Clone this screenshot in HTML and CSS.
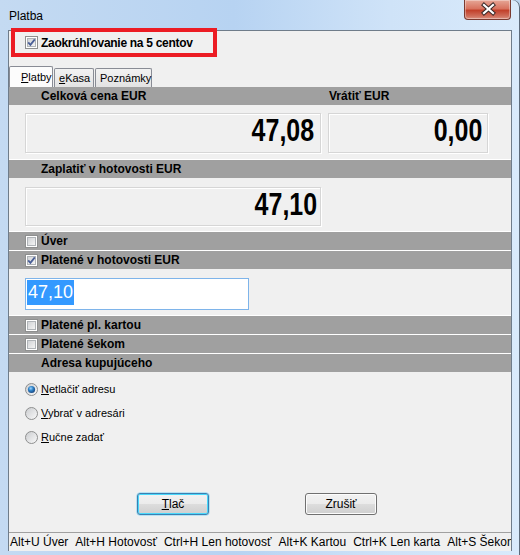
FILE: index.html
```html
<!DOCTYPE html>
<html lang="sk">
<head>
  <meta charset="UTF-8" />
  <title>Platba</title>
  <link rel="stylesheet" href="styles.css">
</head>
<body>
  <svg class="defs" width="0" height="0">
    <defs>
      <linearGradient id="boxFill" x1="0" y1="0" x2="1" y2="1">
        <stop offset="0" stop-color="#cfd1d4" />
        <stop offset="1" stop-color="#f6f6f6" />
      </linearGradient>
      <linearGradient id="radioFill" x1="0" y1="0" x2="1" y2="1">
        <stop offset="0" stop-color="#c9cbce" />
        <stop offset="1" stop-color="#fbfbfb" />
      </linearGradient>
      <radialGradient id="dotFill" cx="0.4" cy="0.35" r="0.7">
        <stop offset="0" stop-color="#9fd6ff" />
        <stop offset="0.45" stop-color="#2f83c8" />
        <stop offset="1" stop-color="#163f78" />
      </radialGradient>
    </defs>
  </svg>

  <div class="window">
    <div class="titlebar">
      <span class="title">Platba</span>
      <div class="close">
        <svg width="47" height="19" viewBox="0 0 47 19">
          <path d="M19 5 L28 13 M28 5 L19 13" stroke="#3b2a28" stroke-width="4.2" stroke-linecap="square" fill="none" />
          <path d="M19 5 L28 13 M28 5 L19 13" stroke="#fff" stroke-width="2.2" stroke-linecap="square" fill="none" />
        </svg>
      </div>
    </div>

    <div class="marker"></div>

    <div class="client">
      <div class="round-row">
        <label class="check">
          <svg width="13" height="13" viewBox="0 0 13 13"><rect x="0.5" y="0.5" width="12" height="12" fill="#fff" stroke="#8e8f8f" /><rect x="2.5" y="2.5" width="8" height="8" fill="url(#boxFill)" stroke="#b0b4b8" /><path d="M3.2 6.4 L5.4 8.8 L9.8 3.4" stroke="#4a5f97" stroke-width="1.8" fill="none" /></svg>
          <span>Zaokrúhľovanie na 5 centov</span>
        </label>
      </div>

      <div class="tabs">
        <div class="tab active"><u>P</u>latby</div>
        <div class="tab"><u>e</u>Kasa</div>
        <div class="tab">Poznámky</div>
      </div>

      <div class="panel">
        <div class="band band-first split">
          <span class="band-col1">Celková cena EUR</span>
          <span class="band-col2">Vrátiť EUR</span>
        </div>
        <div class="area area-sum">
          <div class="value wide"><span class="digits">47,08</span></div>
          <div class="value narrow"><span class="digits">0,00</span></div>
        </div>

        <div class="band"><span class="band-text">Zaplatiť v hotovosti EUR</span></div>
        <div class="area area-pay">
          <div class="value wide"><span class="digits">47,10</span></div>
        </div>

        <div class="band check-band">
          <svg width="13" height="13" viewBox="0 0 13 13"><rect x="0.5" y="0.5" width="12" height="12" fill="#fff" stroke="#8e8f8f" /><rect x="2.5" y="2.5" width="8" height="8" fill="url(#boxFill)" stroke="#b0b4b8" /></svg>
          <span>Úver</span>
        </div>
        <div class="band check-band">
          <svg width="13" height="13" viewBox="0 0 13 13"><rect x="0.5" y="0.5" width="12" height="12" fill="#fff" stroke="#8e8f8f" /><rect x="2.5" y="2.5" width="8" height="8" fill="url(#boxFill)" stroke="#b0b4b8" /><path d="M3.2 6.4 L5.4 8.8 L9.8 3.4" stroke="#4a5f97" stroke-width="1.8" fill="none" /></svg>
          <span>Platené v hotovosti EUR</span>
        </div>
        <div class="area area-input">
          <div class="input"><span class="selected">47,10</span></div>
        </div>

        <div class="band check-band">
          <svg width="13" height="13" viewBox="0 0 13 13"><rect x="0.5" y="0.5" width="12" height="12" fill="#fff" stroke="#8e8f8f" /><rect x="2.5" y="2.5" width="8" height="8" fill="url(#boxFill)" stroke="#b0b4b8" /></svg>
          <span>Platené pl. kartou</span>
        </div>
        <div class="band check-band">
          <svg width="13" height="13" viewBox="0 0 13 13"><rect x="0.5" y="0.5" width="12" height="12" fill="#fff" stroke="#8e8f8f" /><rect x="2.5" y="2.5" width="8" height="8" fill="url(#boxFill)" stroke="#b0b4b8" /></svg>
          <span>Platené šekom</span>
        </div>
        <div class="band"><span class="band-text">Adresa kupujúceho</span></div>

        <div class="radios">
          <label class="radio">
            <svg width="13" height="13" viewBox="0 0 13 13"><circle cx="6.5" cy="6.5" r="6" fill="url(#radioFill)" stroke="#8e8f8f" /><circle cx="6.5" cy="6.5" r="3.6" fill="url(#dotFill)" /></svg>
            <span><u>N</u>etlačiť adresu</span>
          </label>
          <label class="radio">
            <svg width="13" height="13" viewBox="0 0 13 13"><circle cx="6.5" cy="6.5" r="6" fill="url(#radioFill)" stroke="#8e8f8f" /></svg>
            <span><u>V</u>ybrať v adresári</span>
          </label>
          <label class="radio">
            <svg width="13" height="13" viewBox="0 0 13 13"><circle cx="6.5" cy="6.5" r="6" fill="url(#radioFill)" stroke="#8e8f8f" /></svg>
            <span><u>R</u>učne zadať</span>
          </label>
        </div>

        <div class="buttons">
          <button class="btn focused"><u>T</u>lač</button>
          <button class="btn">Zrušiť</button>
        </div>
      </div>

      <div class="status">
        <span>Alt+U Úver</span>
        <span>Alt+H Hotovosť</span>
        <span>Ctrl+H Len hotovosť</span>
        <span>Alt+K Kartou</span>
        <span>Ctrl+K Len karta</span>
        <span>Alt+S Šekom</span>
      </div>
    </div>
  </div>
</body>
</html>
```

FILE: styles.css
```css
:root {
  --frame: #bcd6f1;
  --client-bg: #f0f0f0;
  --band: #a0a0a0;
  --border-dark: #6f7c8a;
  --tab-border: #898c95;
}

* {
  box-sizing: border-box;
  margin: 0;
  padding: 0;
}

body {
  width: 520px;
  height: 555px;
  overflow: hidden;
  font-family: "Liberation Sans", Arial, sans-serif;
  color: #000;
  background: var(--frame);
}

.defs {
  position: absolute;
  width: 0;
  height: 0;
}

.window {
  position: relative;
  width: 520px;
  height: 555px;
  display: flex;
  flex-direction: column;
  background: linear-gradient(90deg, #c4daf2 0%, #b7d3f2 45%, #cfe3f8 75%, #d9eafb 100%);
  border-top-right-radius: 7px;
  box-shadow: inset -1px 0 0 #5d6b7b;
}

.titlebar {
  height: 30px;
  display: flex;
  align-items: flex-start;
  padding: 0 9px 0 9px;
}

.title {
  font-size: 12px;
  line-height: 30px;
  padding-top: 1px;
}

.close {
  margin-left: auto;
  width: 47px;
  height: 20px;
  border: 1px solid #7a3a30;
  border-top: none;
  border-radius: 0 0 4px 4px;
  background: linear-gradient(#e6a797 0%, #d8735f 45%, #c2412b 55%, #cf6e5b 85%, #dc9281 100%);
  box-shadow: inset 0 0 0 1px rgba(255, 255, 255, 0.35);
}

.close svg {
  display: block;
}

.marker {
  position: absolute;
  left: 11px;
  top: 28px;
  width: 206px;
  height: 29px;
  border: 4px solid #ec1c24;
  pointer-events: none;
  z-index: 5;
}

.client {
  flex: 1;
  margin: 0 8px 4px 8px;
  display: flex;
  flex-direction: column;
  background: var(--client-bg);
  border: 1px solid var(--border-dark);
  border-bottom: none;
}

.round-row {
  height: 34px;
  padding: 5px 0 0 16px;
}

.check {
  display: flex;
  align-items: center;
  gap: 2px;
  font-size: 12px;
  font-weight: bold;
  letter-spacing: -0.3px;
  height: 13px;
}

.check svg {
  flex: none;
  margin-right: 1px;
}

.tabs {
  height: 22px;
  display: flex;
  align-items: flex-end;
}

.tab {
  height: 19px;
  padding: 0 4px;
  font-size: 11px;
  line-height: 18px;
  border: 1px solid var(--tab-border);
  border-bottom: none;
  border-radius: 2px 2px 0 0;
  background: linear-gradient(#f2f2f2, #e3e3e3);
  margin-left: 1px;
}

.tab:nth-child(2) {
  width: 40px;
}

.tab:nth-child(3) {
  width: 57px;
}

.tab.active {
  width: 44px;
  height: 21px;
  margin-left: 0;
  padding-left: 11px;
  line-height: 20px;
  background: #fcfcfc;
}

.panel {
  flex: 1;
  display: flex;
  flex-direction: column;
}

.band {
  height: 19px;
  border-top: 1px solid #fff;
  background: var(--band);
  font-size: 12px;
  font-weight: bold;
  display: flex;
  align-items: center;
}

.band-first {
  border-top: none;
  height: 18px;
}

.split {
  display: grid;
  grid-template-columns: 296px 160px;
  column-gap: 7px;
  padding-left: 16px;
}

.band-col1 {
  padding-left: 16px;
}

.band-col2 {
  padding-left: 1px;
}

.band-text {
  padding-left: 32px;
}

.check-band {
  padding-left: 16px;
  gap: 3px;
}

.check-band svg {
  flex: none;
}

.area {
  display: flex;
  gap: 7px;
  padding-left: 16px;
}

.area-sum {
  height: 54px;
  padding-top: 8px;
}

.area-pay {
  height: 53px;
  padding-top: 9px;
}

.area-input {
  height: 46px;
  padding-top: 9px;
}

.value {
  height: 40px;
  border: 1px solid #d6d6d6;
  box-shadow: inset 1px 1px 0 #fff, 1px 1px 0 #fff;
  font-weight: bold;
  font-size: 32px;
  line-height: 32px;
  text-align: right;
  padding-right: 6px;
}

.digits {
  display: inline-block;
  transform: scaleX(0.78);
  transform-origin: right center;
}

.area-pay .value {
  height: 39px;
  padding-right: 3px;
}

.wide {
  width: 296px;
}

.narrow {
  width: 160px;
  padding-right: 5px;
}

.input {
  width: 224px;
  height: 32px;
  background: #fff;
  border: 1px solid #7eb4ea;
  padding: 1px 0 0 1px;
  font-size: 18px;
  line-height: 25px;
}

.selected {
  display: inline-block;
  background: #3399ff;
  color: #fff;
  padding: 0 1px;
}

.radios {
  display: flex;
  flex-direction: column;
  padding: 5px 0 0 16px;
}

.radio {
  height: 24px;
  display: flex;
  align-items: center;
  gap: 3px;
  font-size: 11px;
}

.radio svg {
  flex: none;
}

.buttons {
  margin-top: auto;
  margin-bottom: 17px;
  display: flex;
  gap: 96px;
  padding-left: 128px;
}

.btn {
  width: 72px;
  height: 22px;
  font-family: inherit;
  font-size: 12px;
  color: #000;
  border: 1px solid #707070;
  border-radius: 3px;
  background: linear-gradient(#f2f2f2 0%, #ebebeb 50%, #dddddd 51%, #cfcfcf 100%);
  box-shadow: inset 0 0 0 1px #fcfcfc;
}

.btn.focused {
  border-color: #3c7fb1;
  box-shadow: inset 0 0 0 1px #48d8fb, 0 0 0 0.5px #7ed4f4;
}

.status {
  height: 19px;
  border-top: 1px solid #a0a0a0;
  display: flex;
  align-items: center;
  gap: 7px;
  padding-left: 1px;
  font-size: 12px;
  white-space: nowrap;
  overflow: hidden;
}

.status span {
  flex: none;
}
```
